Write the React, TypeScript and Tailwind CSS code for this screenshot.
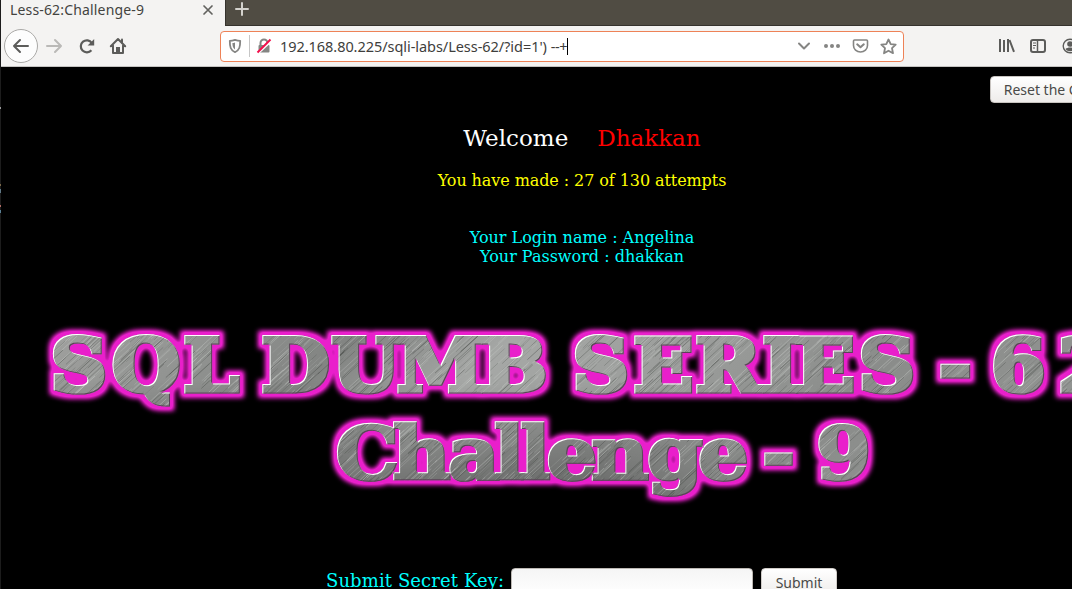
import React from "react";

const SCALE = 1.09;
const LINE_1 = "SQL DUMB SERIES - 62";
const X_1 = [49.5, 111, 182.5, 240, 260.5, 330.5, 396, 480, 550, 571.5, 632.5, 694.5, 761.5, 794, 857.5, 920, 938, 975, 990, 1057];
const LINE_2 = "Challenge - 9";
const X_2 = [334.5, 391.5, 447, 493, 519, 545.5, 590, 646, 697, 745, 761, 795, 815];
const toList = (xs: number[]) => xs.map((x) => (x / SCALE).toFixed(1)).join(" ");

let seed = 987654321;
const random = () => {
  seed ^= seed << 13;
  seed ^= seed >>> 17;
  seed ^= seed << 5;
  return (seed >>> 0) / 4294967296;
};

const streaks = Array.from({ length: 3600 }, () => ({
  x: random() * 1120 - 20,
  y: random() * 210 - 20,
  len: 8 + random() * 24,
  light: random() < 0.55,
  o: 0.12 + random() * 0.38,
}));

function Banner() {
  return (
    <svg className="block" width="1162" height="200" viewBox="0 320 1162 200">
      <defs>
        <linearGradient id="steel" x1="0" y1="0" x2="1" y2="0.18">
          <stop offset="0" stopColor="#a5a5a3" />
          <stop offset="0.18" stopColor="#929492" />
          <stop offset="0.3" stopColor="#828482" />
          <stop offset="0.43" stopColor="#a6a8a6" />
          <stop offset="0.6" stopColor="#9a9c9a" />
          <stop offset="0.75" stopColor="#8a8c8a" />
          <stop offset="1" stopColor="#949694" />
        </linearGradient>
        <linearGradient id="shade" x1="0" y1="0" x2="0" y2="1">
          <stop offset="0.3" stopColor="#000" stopOpacity="0" />
          <stop offset="0.5" stopColor="#000" stopOpacity="0.12" />
          <stop offset="0.85" stopColor="#000" stopOpacity="0.32" />
        </linearGradient>
        <linearGradient id="fade" x1="0" y1="0" x2="1" y2="0">
          <stop offset="0.75" stopColor="#fff" />
          <stop offset="1" stopColor="#000" />
        </linearGradient>
        <mask id="shadeMask" maskUnits="userSpaceOnUse" x="0" y="0" width="720" height="200">
          <rect width="720" height="200" fill="url(#fade)" />
        </mask>
        <pattern id="brushed" patternUnits="userSpaceOnUse" x="0" y="320" width="1100" height="200">
          <rect width="1100" height="200" fill="url(#steel)" />
          <rect width="720" height="200" fill="url(#shade)" mask="url(#shadeMask)" />
          {streaks.map((s, i) => (
            <path
              key={i}
              d={`M${s.x.toFixed(1)} ${(s.y + s.len).toFixed(1)}l${s.len.toFixed(1)} ${(-s.len).toFixed(1)}`}
              stroke={s.light ? "#ccd0cc" : "#3c403c"}
              strokeOpacity={s.o}
              strokeWidth="0.8"
            />
          ))}
        </pattern>
        <filter id="neon" filterUnits="userSpaceOnUse" x="0" y="300" width="1200" height="230" colorInterpolationFilters="sRGB">
          <feMorphology in="SourceAlpha" operator="dilate" radius="4" result="fat" />
          <feGaussianBlur in="fat" stdDeviation="2.6" result="soft" />
          <feComponentTransfer in="soft" result="strong">
            <feFuncA type="linear" slope="1.4" />
          </feComponentTransfer>
          <feFlood floodColor="#e91fcb" />
          <feComposite in2="strong" operator="in" result="glow" />
          <feOffset in="SourceAlpha" dx="1" dy="1" result="inset" />
          <feFlood floodColor="#ffffff" />
          <feComposite in2="SourceAlpha" operator="in" result="white" />
          <feComposite in="white" in2="inset" operator="out" result="highlight" />
          <feOffset in="SourceAlpha" dx="-1" dy="-1" result="inset2" />
          <feFlood floodColor="#5c4258" />
          <feComposite in2="SourceAlpha" operator="in" result="dark" />
          <feComposite in="dark" in2="inset2" operator="out" result="lowlight" />
          <feMerge>
            <feMergeNode in="glow" />
            <feMergeNode in="SourceGraphic" />
            <feMergeNode in="lowlight" />
            <feMergeNode in="highlight" />
          </feMerge>
        </filter>
      </defs>
      <g filter="url(#neon)">
        <g
          transform="scale(1.09 1)"
          fill="url(#brushed)"
          stroke="url(#brushed)"
          fontFamily="'DejaVu Serif', serif"
          fontWeight="700"
        >
          <text y="391" fontSize="72" strokeWidth="5.2" x={toList(X_1)}>{LINE_1}</text>
          <text y="479" fontSize="73" strokeWidth="3.6" x={toList(X_2)}>{LINE_2}</text>
        </g>
      </g>
    </svg>
  );
}

function Toolbar() {
  return (
    <div className="flex h-[41px] shrink-0 items-center border-b border-[#c4c3c1] bg-[#f4f3f2] text-[#5c5c5a]">
      <div className="ml-[3px] flex size-[34px] shrink-0 items-center justify-center rounded-full border border-[#aaa9a7] bg-[#fdfdfd]">
        <svg width="18" height="16" viewBox="0 0 18 16" fill="none" stroke="currentColor" strokeWidth="2" strokeLinecap="round" strokeLinejoin="round"><path d="M16 8H2M8 2L2 8l6 6" /></svg>
      </div>
      <svg className="ml-[7px] shrink-0 text-[#bab9b7]" width="18" height="16" viewBox="0 0 18 16" fill="none" stroke="currentColor" strokeWidth="2" strokeLinecap="round" strokeLinejoin="round"><path d="M2 8h14M10 2l6 6-6 6" /></svg>
      <svg className="ml-[15px] shrink-0" width="18" height="18" viewBox="0 0 18 18" fill="none" stroke="currentColor" strokeWidth="2.2"><path d="M13.4 13.2A6 6 0 1 1 13.8 6" /><path d="M16.2 2v6.6H9.6z" fill="currentColor" stroke="none" /></svg>
      <svg className="ml-[13px] shrink-0" width="18" height="18" viewBox="0 0 18 18" fill="none" stroke="currentColor" strokeWidth="2" strokeLinecap="round" strokeLinejoin="round"><path d="M1.8 9.3L9 2l7.2 7.3M4 8.5V16h10V8.5" /><path d="M13 2.5v3" /><path d="M7 10h4v6H7z" fill="currentColor" stroke="none" /></svg>
      <div className="ml-[93px] flex h-[31px] w-[684px] shrink-0 items-center rounded-[4px] border border-[#ee8257] bg-white text-[#858583]">
        <svg className="ml-[6px] shrink-0" width="16" height="16" viewBox="0 0 16 16"><path d="M8 1.8c2 .7 3.600 1 5.200 1 0 6-.7 9.300-5.200 11.400C3.500 12.100 2.800 8.800 2.800 2.800c1.600 0 3.200-.3 5.200-1z" fill="none" stroke="currentColor" strokeWidth="1.800" strokeLinejoin="round" /><path d="M8 4.500c-1 .4-1.600.5-2.600.6.1 3.500.6 5.100 2.600 6.400z" fill="currentColor" /></svg>
        <div className="ml-[6px] h-[22px] w-px bg-[#c6c6c6]" />
        <svg className="ml-[6px] shrink-0" width="16" height="16" viewBox="0 0 16 16"><path d="M4.500 8V5a3.500 3.500 0 0 1 7 0v3" fill="none" stroke="currentColor" strokeWidth="2" /><rect x="2.500" y="7" width="11" height="7.500" rx="1" fill="currentColor" /><path d="M1.500 15.500L15.500 2.500" stroke="white" strokeWidth="2.500" /><path d="M1.500 14.500L14.500 1.500" stroke="#f20f4b" strokeWidth="2" /></svg>
        <div className="ml-[8px] mt-px flex h-[18px] w-[289px] shrink-0 items-center whitespace-nowrap font-['Noto_Sans',sans-serif] text-[14.500px] tracking-[-0.05px] text-[#3e3e3c]">
          <span>192.168.80.225/sqli-labs/Less-62/?id=1&apos;)&nbsp;</span>
          <span className="tracking-[-0.400px]">--+</span>
          <span className="h-[17px] w-px bg-black" />
        </div>
        <div className="flex-1" />
        <svg className="mr-[12px] shrink-0" width="14" height="14" viewBox="0 0 14 14" fill="none" stroke="currentColor" strokeWidth="2" strokeLinecap="round" strokeLinejoin="round"><path d="M2 4.500l5 5 5-5" /></svg>
        <svg className="mr-[11px] shrink-0" width="18" height="6" viewBox="0 0 18 6" fill="currentColor"><circle cx="3" cy="3" r="2" /><circle cx="9" cy="3" r="2" /><circle cx="15" cy="3" r="2" /></svg>
        <svg className="mr-[11px] shrink-0" width="17" height="16" viewBox="0 0 17 16" fill="none" stroke="currentColor" strokeWidth="2" strokeLinecap="round" strokeLinejoin="round"><path d="M2.500 2h12q1 0 1 1v4.500a7 6.500 0 0 1-14 0V3q0-1 1-1z" strokeWidth="1.600" /><path d="M5.200 6.300l3.300 3 3.300-3" /></svg>
        <svg className="mr-[6px] shrink-0" width="17" height="17" viewBox="0 0 17 17" fill="none" stroke="currentColor" strokeWidth="1.800" strokeLinejoin="round"><path d="M8.500 1.500l2.200 4.600 5 .6-3.700 3.500 1 5-4.500-2.500L4 15.200l1-5L1.300 6.700l5-.6z" /></svg>
      </div>
      <svg className="ml-[94px] shrink-0" width="18" height="16" viewBox="0 0 18 16" stroke="currentColor" strokeWidth="2"><path d="M2 1v13M6 2v12M10 1v13M11.500 2L16 13.800" /></svg>
      <svg className="ml-[13px] shrink-0" width="18" height="16" viewBox="0 0 18 16" fill="none" stroke="currentColor" strokeWidth="2"><rect x="2" y="2" width="14" height="12" rx="2" /><path d="M8.500 2v12" strokeWidth="1.500" /><path d="M4 5h3M4 7.500h3M4 10h2" strokeWidth="1" /></svg>
      <svg className="ml-[15px] shrink-0" width="16" height="16" viewBox="0 0 16 16"><circle cx="8" cy="8" r="6.800" fill="none" stroke="currentColor" strokeWidth="1.400" /><circle cx="8" cy="6" r="2.800" fill="currentColor" /><path d="M3.500 11c2-2 7-2 9 0-2 3-7 3-9 0z" fill="currentColor" /></svg>
    </div>
  );
}

export default function App() {
  return (
    <div className="flex h-[589px] w-[1072px] overflow-hidden bg-black">
      <div className="flex w-px shrink-0 flex-col bg-[#1c1c1c]">
        <div className="mt-[107px] h-[2px] bg-[#99999b]" />
        <div className="mt-[75px] h-[2px] bg-[#7b6849]" />
        <div className="mt-[3px] h-[4px] bg-[#607987]" />
        <div className="mt-[12px] h-[2px] bg-[#b26c64]" />
        <div className="mt-[3px] h-[3px] bg-[#598096]" />
      </div>
      <div className="flex w-[1071px] shrink-0 flex-col overflow-hidden">
        <div className="flex h-[26px] shrink-0 bg-[#504c43]">
          <div className="flex h-[26px] w-[224px] shrink-0 items-start bg-[#f4f3f2] font-['Noto_Sans',sans-serif] text-[14px] leading-[20px] text-[#43433f]">
            <span className="ml-[9px] w-[190px] tracking-[0.16px]">Less-62:Challenge-9</span>
            <svg className="ml-[2px] mt-[4px]" width="12" height="12" viewBox="0 0 12 12" stroke="#62625f" strokeWidth="1.700" strokeLinecap="round"><path d="M2 2l8 8M10 2l-8 8" /></svg>
          </div>
          <div className="flex flex-1 items-start border-b border-l border-[#35322d]">
            <svg className="ml-[8px] mt-[1px]" width="16" height="16" viewBox="0 0 16 16" stroke="#d4d2cd" strokeWidth="2" strokeLinecap="round"><path d="M8 2v12M2 8h12" /></svg>
          </div>
        </div>
        <Toolbar />
        <main className="flex w-[1162px] shrink-0 flex-col bg-black font-['DejaVu_Serif',serif] text-[16px] leading-[19px]">
          <div className="flex h-[37px] shrink-0 items-end justify-end">
            <button className="mb-px mr-[8px] h-[27px] w-[165px] shrink-0 whitespace-nowrap rounded-[4px] border border-[#c7c3bf] bg-gradient-to-b from-white to-[#eeecea] pr-[3px] font-['Noto_Sans',sans-serif] text-[14px] text-[#4a4a48]">Reset the Challenge!</button>
          </div>
          <div className="mt-[20px] flex h-[28px] items-center justify-center text-[23px] leading-[28px]">
            <span className="text-white">Welcome</span>
            <span className="ml-[29px] text-[#f00]">Dhakkan</span>
          </div>
          <div className="mt-[19px] text-center tracking-[-0.08px] text-[#ff0]">You have made : 27 of 130 attempts</div>
          <div className="mt-[38px] text-center text-[#0ff]">Your Login name : Angelina<br />Your Password : dhakkan</div>
          <div className="mt-[54px] h-[200px] w-[1162px] shrink-0"><Banner /></div>
          <div className="mt-[48px] flex h-[28px] shrink-0 items-start pl-[325px]">
            <span className="mt-[2px] w-[185px] whitespace-nowrap text-[18px] leading-[22px] tracking-[0.1px] text-[#0ff]">Submit Secret Key:</span>
            <input aria-label="Secret key" className="h-[28px] w-[242px] rounded-[4px] border border-[#bdb9b4] bg-gradient-to-b from-[#f5f5f5] to-white" />
            <button className="ml-[8px] h-[28px] w-[76px] rounded-[4px] border border-[#d0ccc8] bg-gradient-to-b from-white to-[#eeecea] font-['Noto_Sans',sans-serif] text-[14px] text-[#4a4a48]">Submit</button>
          </div>
        </main>
      </div>
    </div>
  );
}
